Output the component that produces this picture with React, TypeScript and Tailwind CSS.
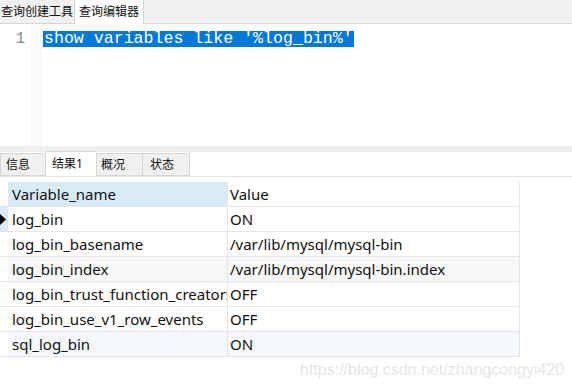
import React from "react";

const rows = [
  { name: "log_bin", value: "ON", bg: "bg-white", current: true },
  { name: "log_bin_basename", value: "/var/lib/mysql/mysql-bin", bg: "bg-white" },
  { name: "log_bin_index", value: "/var/lib/mysql/mysql-bin.index", bg: "bg-[#f7f7f7]" },
  { name: "log_bin_trust_function_creators", value: "OFF", bg: "bg-white" },
  { name: "log_bin_use_v1_row_events", value: "OFF", bg: "bg-white" },
  { name: "sql_log_bin", value: "ON", bg: "bg-[#f4f8fc]" },
];

const ui = { fontFamily: '"Noto Sans", "Noto Sans CJK SC", sans-serif' };
const mono = { fontFamily: '"Liberation Mono", monospace' };

export default function App() {
  return (
    <div className="w-[572px] h-[388px] bg-white overflow-hidden relative text-[#111]" style={ui}>
      {/* Query tabs */}
      <div className="h-[24px] bg-[#f0f0f0] border-b border-[#d6d6d6] flex items-end">
        <div className="h-[23px] w-[75px] border-r border-[#d6d6d6] flex items-center justify-center text-[12px] leading-none">
          查询创建工具
        </div>
        <div className="h-[24px] w-[69px] bg-white border-r border-[#d6d6d6] -mb-px flex items-center justify-center text-[12px] leading-none">
          查询编辑器
        </div>
      </div>

      {/* Editor */}
      <div className="h-[122px] flex leading-[16px]">
        <div className="w-[31px] bg-white pt-[7px] pr-[6px] text-right text-[16px] text-[#8a8a8a]" style={mono}>
          1
        </div>
        <div className="w-[12px] bg-[#fafafa]" />
        <div className="pt-[7px] flex items-start">
          <div className="bg-[#0078d7] text-white text-[16.6px] leading-[16px] h-[16px] px-px whitespace-pre" style={mono}>
            show variables like '%log_bin%'
          </div>
        </div>
      </div>

      {/* Result tabs */}
      <div className="h-[6px] bg-[#f0f0f0]" />
      <div className="h-[25px] flex items-end border-b border-[#e3e3e3]">
        <div className="h-[23px] w-[46px] bg-[#f0f0f0] border border-[#d6d6d6] flex items-center pl-[5px] text-[12px]">信息</div>
        <div className="h-[25px] w-[50px] bg-white border-t border-[#d6d6d6] flex items-center pl-[6px] text-[12px]">结果1</div>
        <div className="h-[23px] w-[47px] bg-[#f0f0f0] border border-[#d6d6d6] flex items-center pl-[4px] text-[12px]">概况</div>
        <div className="h-[23px] w-[47px] bg-[#f0f0f0] border border-r border-l-0 border-[#d6d6d6] flex items-center pl-[7px] text-[12px]">状态</div>
      </div>

      {/* Grid */}
      <div className="mt-[5px] w-[520px] grid grid-cols-[8px_220px_292px] text-[15px] leading-none">
        <div className="h-[25px] border-b border-[#e6e6e6]" />
        <div className="h-[25px] bg-[#d9eaf7] border-b border-r border-[#e6e6e6] flex items-center pl-[4px] whitespace-nowrap overflow-hidden">
          Variable_name
        </div>
        <div className="h-[25px] bg-white border-b border-r border-[#e6e6e6] flex items-center pl-[2px]">Value</div>
        {rows.map((r) => (
          <React.Fragment key={r.name}>
            <div className={`h-[25px] border-b border-[#e6e6e6] flex items-center ${r.current ? "bg-[#d9eaf7]" : "bg-white"}`}>
              {r.current && (
                <svg width="7" height="11" viewBox="0 0 7 11">
                  <path d="M0 0 L6 5.5 L0 11 Z" fill="#000" />
                </svg>
              )}
            </div>
            <div className={`h-[25px] ${r.bg} border-b border-r border-[#e6e6e6] flex items-center pl-[4px] whitespace-nowrap overflow-hidden`}>
              {r.name}
            </div>
            <div className={`h-[25px] ${r.bg} border-b border-r border-[#e6e6e6] flex items-center pl-[2px] whitespace-nowrap`}>
              {r.value}
            </div>
          </React.Fragment>
        ))}
      </div>

      {/* Watermark */}
      <div
        className="absolute left-[300px] top-[361px] text-[16px] leading-[18px] text-[#e6e6e6]"
        style={{ fontFamily: '"Liberation Sans", sans-serif' }}
      >
        https://blog.csdn.net/zhangcongyi420
      </div>
    </div>
  );
}
